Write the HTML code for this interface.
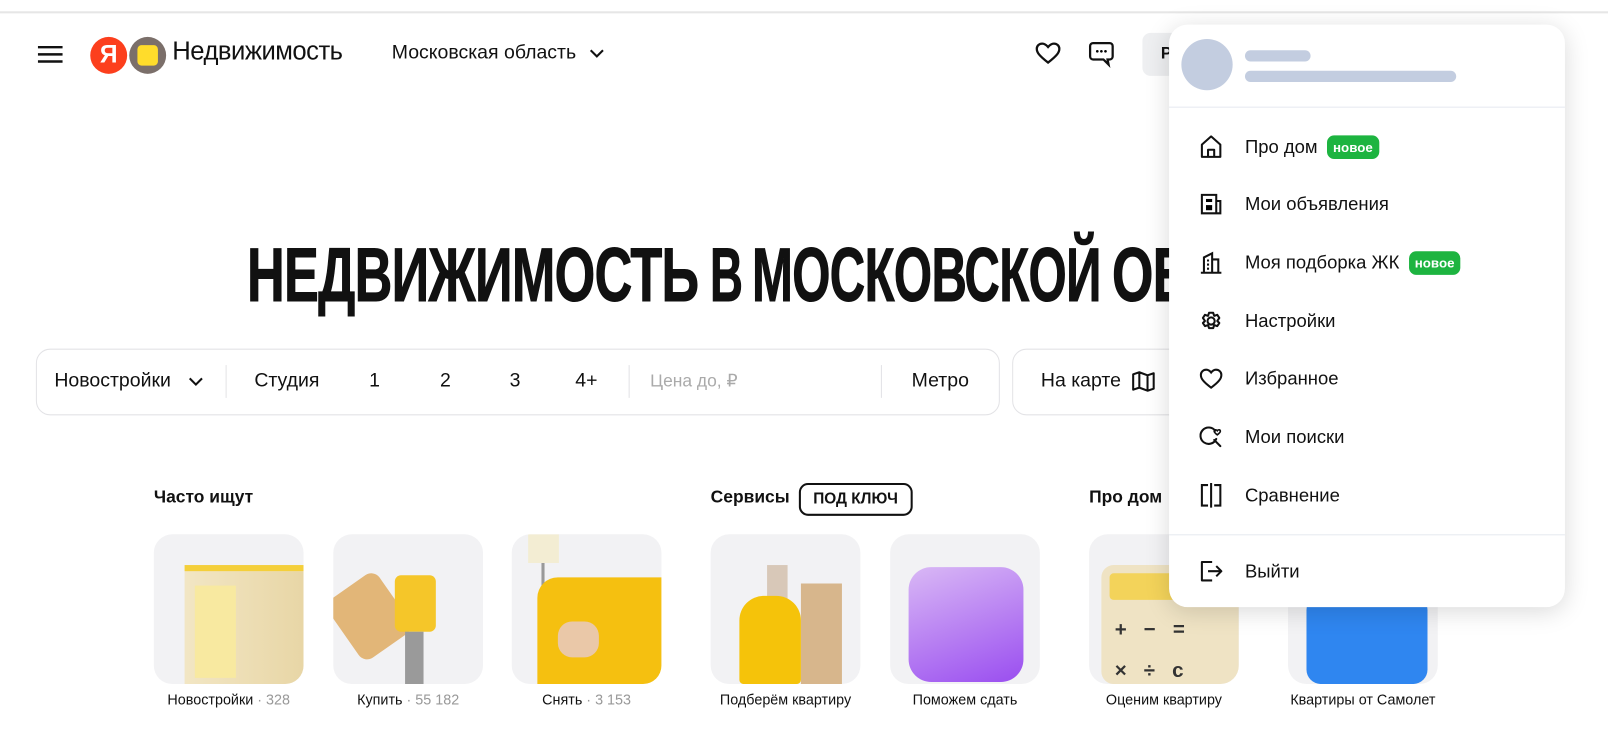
<!DOCTYPE html>
<html><head><meta charset="utf-8"><style>
*{box-sizing:border-box;margin:0;padding:0}
body{width:1608px;height:735px;overflow:hidden;background:#fff;font-family:"Liberation Sans",sans-serif;color:#111;position:relative}
.wrap{position:absolute;left:0;top:0;width:1568px;height:717px;transform:scale(1.0255);transform-origin:0 0}
.abs{position:absolute}
.topline{left:0;top:11px;width:1608px;height:2px;background:#e6e6e6}
.t{font-size:19px;white-space:nowrap}
.card{position:absolute;top:521px;width:146px;height:146px;border-radius:18px;background:#f2f2f4;overflow:hidden}
.lbl{position:absolute;top:674px;font-size:14px;white-space:nowrap;text-align:center;width:200px}
.lbl span{color:#999}
.dd{left:1140px;top:24px;width:386px;height:568px;background:#fff;border-radius:18px;box-shadow:0 4px 24px rgba(0,0,0,.15)}
.mi{position:absolute;left:28px;font-size:18px;display:flex;align-items:center;white-space:nowrap}
.mi svg{width:26px;height:26px;margin-right:20px}
.new{background:#1db440;color:#fff;font-size:13px;font-weight:bold;border-radius:7px;padding:4px 6px;margin-left:9px}
.h{position:absolute;top:236px;font-weight:bold;font-size:76px;line-height:80px;white-space:nowrap;transform-origin:left;letter-spacing:-1px;-webkit-text-stroke:1px #111}
</style></head><body>
<div class="h" style="left:247px;transform:scaleX(0.687)">НЕДВИЖИМОСТЬ</div>
<div class="h" style="left:710px;transform:scaleX(0.6)">В</div>
<div class="h" style="left:752px;transform:scaleX(0.646)">МОСКОВСКОЙ</div>
<div class="h" style="left:1112px;transform:scaleX(0.7)">ОБЛАСТИ</div>
<div class="wrap">
<div class="abs topline"></div>
<svg class="abs" style="left:36px;top:43px" width="26" height="20"><path d="M1 3h24M1 10h24M1 17h24" stroke="#111" stroke-width="2.4"/></svg>
<div class="abs" style="left:88px;top:36px;width:36px;height:36px;border-radius:50%;background:#fc3f1d;color:#fff;font-weight:bold;font-size:24px;text-align:center;line-height:36px">Я</div>
<div class="abs" style="left:126px;top:36px;width:36px;height:36px;border-radius:50%;background:#7b6f6a"></div>
<div class="abs" style="left:134px;top:44px;width:20px;height:20px;border-radius:4px;background:#ffdc2b"></div>
<div class="abs" style="left:168px;top:36px;font-size:25px;letter-spacing:-0.5px">Недвижимость</div>
<div class="abs t" style="left:382px;top:41px">Московская область</div>
<svg class="abs" style="left:574px;top:46px" width="16" height="12"><path d="M2 3l6 6 6-6" stroke="#111" stroke-width="2" fill="none"/></svg>
<svg class="abs" style="left:1009px;top:40px" width="26" height="24"><path d="M13 21C4 14 2 11 2 7.5 2 4.5 4.5 2.5 7.3 2.5c2.3 0 4 1.3 5.7 3.3 1.7-2 3.4-3.3 5.7-3.3 2.8 0 5.3 2 5.3 5 0 3.5-2 6.5-11 13.5z" stroke="#111" stroke-width="2.2" fill="none"/></svg>
<svg class="abs" style="left:1061px;top:39px" width="26" height="28"><path d="M5 3h16a3 3 0 0 1 3 3v10a3 3 0 0 1-3 3h-2l1 5-5-5H5a3 3 0 0 1-3-3V6a3 3 0 0 1 3-3z" stroke="#111" stroke-width="2.2" fill="none"/><circle cx="9" cy="11" r="1.3"/><circle cx="13" cy="11" r="1.3"/><circle cx="17" cy="11" r="1.3"/></svg>
<div class="abs" style="left:1114px;top:32px;width:60px;height:42px;border-radius:8px;background:#eeeff1"></div>
<div class="abs" style="left:1132px;top:44px;font-size:16px;font-weight:bold">P</div>
<div class="abs" style="left:35px;top:340px;width:940px;height:65px;border:1px solid #e3e3e6;border-radius:14px;background:#fff"></div>
<div class="abs t" style="left:53px;top:361px">Новостройки</div>
<svg class="abs" style="left:183px;top:366px" width="16" height="12"><path d="M2 3l6 6 6-6" stroke="#111" stroke-width="2" fill="none"/></svg>
<div class="abs" style="left:220px;top:356px;width:1px;height:32px;background:#e3e3e6"></div>
<div class="abs t" style="left:248px;top:361px">Студия</div>
<div class="abs t" style="left:360px;top:361px">1</div>
<div class="abs t" style="left:429px;top:361px">2</div>
<div class="abs t" style="left:497px;top:361px">3</div>
<div class="abs t" style="left:561px;top:361px">4+</div>
<div class="abs" style="left:613px;top:356px;width:1px;height:32px;background:#e3e3e6"></div>
<div class="abs" style="left:634px;top:362px;font-size:17px;color:#aaa">Цена до, ₽</div>
<div class="abs" style="left:859px;top:356px;width:1px;height:32px;background:#e3e3e6"></div>
<div class="abs t" style="left:889px;top:361px">Метро</div>
<div class="abs" style="left:987px;top:340px;width:200px;height:65px;border:1px solid #e3e3e6;border-radius:14px;background:#fff"></div>
<div class="abs t" style="left:1015px;top:361px">На карте</div>
<svg class="abs" style="left:1103px;top:361px" width="24" height="22"><path d="M2 4l6-2 8 3 6-2v15l-6 2-8-3-6 2z M8 2v15 M16 5v15" stroke="#111" stroke-width="2" fill="none" stroke-linejoin="round"/></svg>
<div class="abs" style="left:150px;top:475px;font-size:17px;font-weight:bold">Часто ищут</div>
<div class="abs" style="left:693px;top:475px;font-size:17px;font-weight:bold">Сервисы</div>
<div class="abs" style="left:779px;top:471px;height:32px;padding:0 12px;border:2px solid #111;border-radius:9px;font-size:15px;font-weight:bold;line-height:28px">ПОД КЛЮЧ</div>
<div class="abs" style="left:1062px;top:475px;font-size:17px;font-weight:bold">Про дом</div>
<div class="card" style="left:150px"><div class="abs" style="left:30px;top:30px;width:116px;height:116px;background:linear-gradient(90deg,#f2e6c4,#e8d6a6);border-top:6px solid #f4cf3a"></div><div class="abs" style="left:40px;top:50px;width:40px;height:90px;background:#f8e9a0"></div></div>
<div class="card" style="left:325px"><div class="abs" style="left:5px;top:45px;width:60px;height:70px;background:#e2b678;border-radius:10px;transform:rotate(-35deg)"></div><div class="abs" style="left:60px;top:40px;width:40px;height:55px;background:#f5c629;border-radius:6px"></div><div class="abs" style="left:70px;top:95px;width:18px;height:51px;background:#9a9a9a"></div></div>
<div class="card" style="left:499px"><div class="abs" style="left:16px;top:0;width:30px;height:28px;background:#f3edd3"></div><div class="abs" style="left:29px;top:28px;width:3px;height:60px;background:#999"></div><div class="abs" style="left:25px;top:42px;width:121px;height:104px;background:#f5c010;border-radius:20px 0 0 0"></div><div class="abs" style="left:45px;top:85px;width:40px;height:35px;background:#eac8a8;border-radius:14px"></div></div>
<div class="card" style="left:693px"><div class="abs" style="left:55px;top:30px;width:20px;height:60px;background:#d8c8b8"></div><div class="abs" style="left:88px;top:48px;width:40px;height:98px;background:#d7b68c"></div><div class="abs" style="left:28px;top:60px;width:60px;height:86px;background:#f5c30a;border-radius:24px 24px 4px 4px"></div></div>
<div class="card" style="left:868px"><div class="abs" style="left:18px;top:32px;width:112px;height:112px;background:linear-gradient(160deg,#d9b8f5,#9a4ef0);border-radius:22px"></div></div>
<div class="card" style="left:1062px"><div class="abs" style="left:12px;top:30px;width:134px;height:116px;background:#efe3c4;border-radius:12px"></div><div class="abs" style="left:20px;top:38px;width:100px;height:26px;background:#f3d35a;border-radius:4px"></div>
<div class="abs" style="left:25px;top:82px;font-size:20px;font-weight:bold;color:#333">+ &nbsp; − &nbsp; =</div><div class="abs" style="left:25px;top:122px;font-size:20px;font-weight:bold;color:#333">× &nbsp; ÷ &nbsp; c</div></div>
<div class="card" style="left:1256px"><div class="abs" style="left:18px;top:60px;width:118px;height:86px;background:#2f86f0;border-radius:14px"></div></div>
<div class="lbl" style="left:123px">Новостройки <span>· 328</span></div>
<div class="lbl" style="left:298px">Купить <span>· 55 182</span></div>
<div class="lbl" style="left:472px">Снять <span>· 3 153</span></div>
<div class="lbl" style="left:666px">Подберём квартиру</div>
<div class="lbl" style="left:841px">Поможем сдать</div>
<div class="lbl" style="left:1035px">Оценим квартиру</div>
<div class="lbl" style="left:1229px">Квартиры от Самолет</div>
<div class="abs dd">
<div class="abs" style="left:12px;top:14px;width:50px;height:50px;border-radius:50%;background:#c3cde0"></div>
<div class="abs" style="left:74px;top:25px;width:64px;height:11px;border-radius:6px;background:#c3cde0"></div>
<div class="abs" style="left:74px;top:45px;width:206px;height:11px;border-radius:6px;background:#c3cde0"></div>
<div class="abs" style="left:0;top:80px;width:386px;height:1px;background:#e6e9f0"></div>
<div class="mi" style="top:106px"><svg viewBox="0 0 26 26"><path d="M4 23V11l9-8 9 8v12zM10 23v-7h6v7" stroke="#111" stroke-width="2" fill="none" stroke-linejoin="round"/></svg>Про дом<span class="new">новое</span></div>
<div class="mi" style="top:162px"><svg viewBox="0 0 26 26"><path d="M4 4h14v18H4zM18 10h4v12h-4" stroke="#111" stroke-width="2" fill="none"/><rect x="8" y="8" width="6" height="3"/><rect x="8" y="14" width="6" height="5"/></svg>Мои объявления</div>
<div class="mi" style="top:219px"><svg viewBox="0 0 26 26"><path d="M3 23h20M6 23V8l8-4v19M14 10h6v13M9 11h2M9 15h2M9 19h2" stroke="#111" stroke-width="2" fill="none"/></svg>Моя подборка ЖК<span class="new">новое</span></div>
<div class="mi" style="top:276px"><svg viewBox="0 0 26 26"><circle cx="13" cy="13" r="3.5" stroke="#111" stroke-width="2" fill="none"/><path d="M11 3h4l1 3 3-1 2 3-2 3 2 2-2 3-3-1-1 3h-4l-1-3-3 1-2-3 2-2-2-3 2-3 3 1z" stroke="#111" stroke-width="2" fill="none" stroke-linejoin="round" transform="translate(0 2)"/></svg>Настройки</div>
<div class="mi" style="top:332px"><svg viewBox="0 0 26 26"><path d="M13 22C5 16 3 13 3 9.5 3 6.5 5.5 4.5 8.3 4.5c2 0 3.4 1.1 4.7 2.8 1.3-1.7 2.7-2.8 4.7-2.8 2.8 0 5.3 2 5.3 5 0 3.5-2 6.5-10 12.5z" stroke="#111" stroke-width="2" fill="none"/></svg>Избранное</div>
<div class="mi" style="top:389px"><svg viewBox="0 0 26 26"><path d="M17 7a8 8 0 1 0 1 8M16 16l6 6" stroke="#111" stroke-width="2" fill="none" stroke-linecap="round"/><path d="M19 11c-2-1.5-3-2.5-3-3.5 0-1.5 2-2 3-.5 1-1.5 3-1 3 .5 0 1-1 2-3 3.5z" stroke="#111" stroke-width="1.6" fill="none"/></svg>Мои поиски</div>
<div class="mi" style="top:446px"><svg viewBox="0 0 26 26"><path d="M10 3H4v20h6M16 3h6v20h-6M13 1v24" stroke="#111" stroke-width="2" fill="none"/></svg>Сравнение</div>
<div class="abs" style="left:0;top:497px;width:386px;height:1px;background:#e6e9f0"></div>
<div class="mi" style="top:520px"><svg viewBox="0 0 26 26"><path d="M14 4H4v18h10M10 13h13M18 8l5 5-5 5" stroke="#111" stroke-width="2" fill="none" stroke-linejoin="round"/></svg>Выйти</div>
</div>
</div>
</body></html>
